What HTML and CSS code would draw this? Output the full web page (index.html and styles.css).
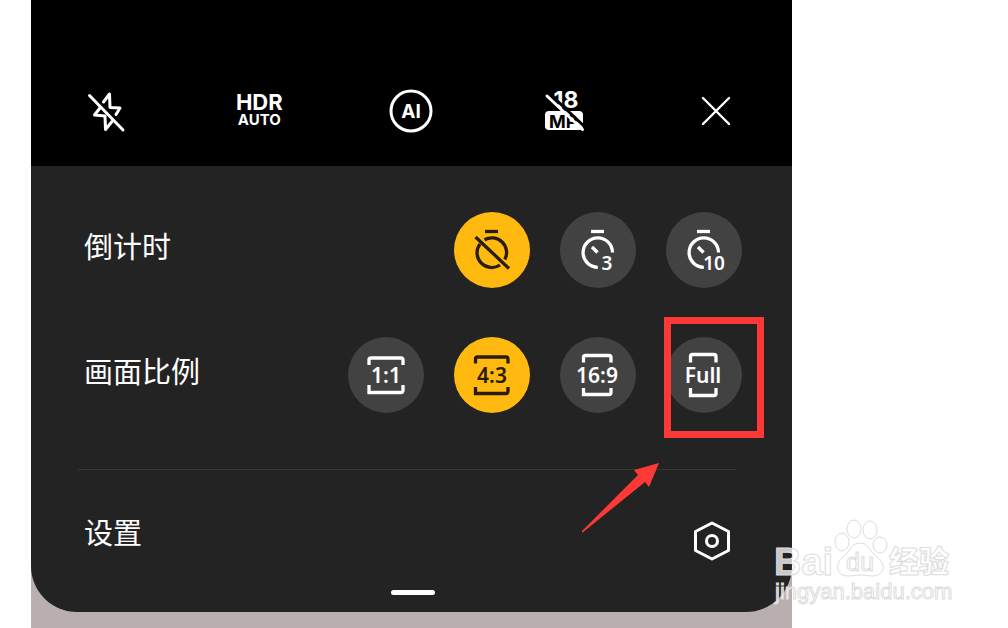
FILE: index.html
```html
<!DOCTYPE html>
<html lang="zh-CN">
<head>
    <meta charset="UTF-8">
    <meta name="viewport" content="width=device-width, initial-scale=1.0">
    <title>相机设置</title>
    <link rel="stylesheet" href="styles.css">
</head>
<body>
    <main class="screen">
        <header class="toolbar">
            <button type="button" class="tool" aria-label="闪光灯关闭">
                <svg class="icon" viewBox="0 0 44 44">
                    <path class="line" d="M18.500 13 L24.500 5 L25 18.500 L35 19 L31 25.500 M15 19 L9.500 26 L20 27 L20.500 40.500 L27 32.500"/>
                    <path class="line" d="M4.500 6.500 L38 41"/>
                </svg>
            </button>
            <button type="button" class="tool hdr">
                <span class="hdr-title">HDR</span>
                <span class="hdr-mode">AUTO</span>
            </button>
            <button type="button" class="tool" aria-label="AI">
                <svg class="icon" viewBox="0 0 44 44">
                    <circle class="line" cx="22" cy="22" r="20"/>
                    <text class="ai-text" x="22" y="29">AI</text>
                </svg>
            </button>
            <button type="button" class="tool" aria-label="18MP 关闭">
                <svg class="icon" viewBox="0 0 44 44">
                    <text class="mp-number" x="24" y="19">18</text>
                    <rect x="3" y="22" width="38" height="19" rx="4" fill="#fff"/>
                    <text class="mp-unit" x="7" y="39">MP</text>
                    <path d="M7 4 L44 39" stroke="#000" stroke-width="3"/>
                    <path class="line" d="M5 7 L40.500 40.500"/>
                </svg>
            </button>
            <button type="button" class="tool" aria-label="关闭">
                <svg class="icon" viewBox="0 0 44 44">
                    <path class="line thin" d="M9 9 L35 35 M35 9 L9 35"/>
                </svg>
            </button>
        </header>

        <section class="panel">
            <div class="row" role="group" aria-labelledby="timer-label">
                <h2 class="label" id="timer-label">倒计时</h2>
                <div class="options">
                    <button type="button" class="option active" aria-pressed="true" aria-label="倒计时关闭">
                        <svg viewBox="0 0 76 76">
                            <path d="M31 19.500 H44"/>
                            <path d="M30.500 27.800 A14.700 14.700 0 0 1 50.800 47.500 M26 32 A14.700 14.700 0 0 0 46 53"/>
                            <path d="M21.500 25 L55 56.500"/>
                        </svg>
                    </button>
                    <button type="button" class="option" aria-pressed="false" aria-label="3 秒">
                        <svg viewBox="0 0 76 76">
                            <path d="M31 19.500 H44"/>
                            <path d="M52.500 40.500 A14.700 14.700 0 1 0 37.800 55.300"/>
                            <path d="M32 35 L37.500 40.500"/>
                            <text class="seconds" x="47" y="58">3</text>
                        </svg>
                    </button>
                    <button type="button" class="option" aria-pressed="false" aria-label="10 秒">
                        <svg viewBox="0 0 76 76">
                            <path d="M31 19.500 H44"/>
                            <path d="M52.500 40.500 A14.700 14.700 0 1 0 37.800 55.300"/>
                            <path d="M32 35 L37.500 40.500"/>
                            <text class="seconds" x="48" y="58">10</text>
                        </svg>
                    </button>
                </div>
            </div>

            <div class="row" role="group" aria-labelledby="ratio-label">
                <h2 class="label" id="ratio-label">画面比例</h2>
                <div class="options">
                    <button type="button" class="option" aria-pressed="false">
                        <svg viewBox="0 0 76 76">
                            <path d="M21 28 V23 Q21 21 23 21 H53 Q55 21 55 23 V28 M21 48 V55.500 H53 Q55 55.500 55 53 V48"/>
                            <text x="38" y="46">1:1</text>
                        </svg>
                    </button>
                    <button type="button" class="option active" aria-pressed="true">
                        <svg viewBox="0 0 76 76">
                            <path d="M21.500 26.500 V22 Q21.500 20 23.500 20 H52 Q54 20 54 22 V26.500 M21.500 50 V56.500 H52 Q54 56.500 54 54 V50"/>
                            <text x="38" y="46">4:3</text>
                        </svg>
                    </button>
                    <button type="button" class="option" aria-pressed="false">
                        <svg viewBox="0 0 76 76">
                            <path d="M23.500 25.500 V20.500 Q23.500 18.500 25.500 18.500 H49 Q51 18.500 51 20.500 V25.500 M23.500 51 V57.500 H49 Q51 57.500 51 55.500 V51"/>
                            <text x="37" y="46">16:9</text>
                        </svg>
                    </button>
                    <div class="marked">
                        <button type="button" class="option" aria-pressed="false">
                            <svg viewBox="0 0 76 76">
                                <path d="M24.500 25.500 V19.500 Q24.500 17.500 26.500 17.500 H48 Q50 17.500 50 19.500 V25.500 M24.500 51 V58.500 H48 Q50 58.500 50 56.500 V51"/>
                                <text x="37" y="46">Full</text>
                            </svg>
                        </button>
                        <svg class="marker" viewBox="0 0 182 216" aria-hidden="true">
                            <rect x="85.500" y="3.500" width="93" height="114" fill="none" stroke="#fd3938" stroke-width="7"/>
                            <path d="M77 146 L52 153 L56 158 L0 214 V216 L63 165 L67 170 Z" fill="#fd3938"/>
                        </svg>
                    </div>
                </div>
            </div>

            <hr class="divider">

            <div class="row settings">
                <h2 class="label">设置</h2>
                <button type="button" class="tool" aria-label="设置">
                    <svg class="icon" viewBox="0 0 44 44">
                        <path class="line" d="M22 4 L38.500 12.500 V31.500 L22 40 L5.500 31.500 V12.500 Z"/>
                        <circle class="line" cx="22" cy="22" r="5.500"/>
                    </svg>
                </button>
            </div>

            <div class="handle"></div>
        </section>

        <svg class="watermark" viewBox="0 0 182 88" role="img" aria-label="Baidu 经验">
            <text class="wm-brand" x="0" y="57">Bai</text>
            <ellipse cx="68" cy="24" rx="7" ry="9"/>
            <ellipse cx="80" cy="11" rx="7" ry="9"/>
            <ellipse cx="96" cy="12" rx="7" ry="9"/>
            <ellipse cx="106" cy="27" rx="7" ry="8"/>
            <path d="M86 25 C95 25 96 34 103 39 C114 47 109 58 99 58 C94 58 91 57 86 57 C81 57 79 58 74 58 C62 58 61 46 68 40 C76 34 77 25 86 25 Z"/>
            <text class="wm-du" x="72" y="53">du</text>
            <text class="wm-cn" x="115" y="54">经验</text>
            <text class="wm-url" x="1" y="81">jingyan.baidu.com</text>
        </svg>
    </main>
</body>
</html>
```
FILE: styles.css
```css
* {
    margin: 0;
    padding: 0;
    box-sizing: border-box;
}

body {
    background: #fff;
    font-family: Inter, "Noto Sans CJK SC", sans-serif;
    padding: 0 216px 0 31px;
}

button {
    background: none;
    border: none;
    color: inherit;
    font: inherit;
    cursor: pointer;
}

.screen {
    position: relative;
    min-height: 100vh;
    padding-bottom: 16px;
    background: linear-gradient(#000 50%, #b9afae 50%);
    color: #fff;
}

.toolbar {
    display: grid;
    grid-template-columns: repeat(5, 1fr);
    justify-items: center;
    align-items: center;
    height: 166px;
    padding-top: 56px;
    background: #000;
}

.tool {
    display: flex;
    justify-content: center;
    align-items: center;
}

.icon {
    display: block;
    width: 44px;
    height: 44px;
    overflow: visible;
}

.line {
    fill: none;
    stroke: #fff;
    stroke-width: 3;
    stroke-linecap: round;
    stroke-linejoin: round;
}

.line.thin {
    stroke-width: 2.4;
}

.hdr {
    flex-direction: column;
    font-weight: 700;
}

.hdr-title {
    font-size: 22px;
    line-height: 18px;
}

.hdr-mode {
    font-size: 15px;
    line-height: 18px;
}

.icon text {
    fill: #fff;
    font-family: Inter, sans-serif;
    font-weight: 700;
}

.ai-text {
    font-size: 19px;
    text-anchor: middle;
}

.mp-number {
    font-size: 23px;
    text-anchor: middle;
}

.icon .mp-unit {
    fill: #000;
    font-size: 18px;
}

.panel {
    padding: 46px 50px 17px 53px;
    background: #242323;
    border-radius: 0 0 46px 46px;
}

.row {
    display: flex;
    justify-content: space-between;
    align-items: center;
    margin-bottom: 49px;
}

.label {
    padding-bottom: 10px;
    font-family: KaiTi, STKaiti, "Noto Sans CJK SC", sans-serif;
    font-size: 29px;
    font-weight: 400;
    line-height: 32px;
}

.options {
    display: flex;
    gap: 30px;
}

.option {
    display: block;
    width: 76px;
    height: 76px;
    border-radius: 50%;
    background: #434243;
    color: #fff;
}

.option.active {
    background: #ffb90f;
    color: #2b1c08;
}

.option svg {
    display: block;
    width: 76px;
    height: 76px;
}

.option path {
    fill: none;
    stroke: currentColor;
    stroke-width: 3.3;
}

.option text {
    fill: currentColor;
    font-family: "Noto Sans", sans-serif;
    font-size: 21px;
    font-weight: 600;
    text-anchor: middle;
}

.option .seconds {
    font-size: 19px;
}

.marked {
    position: relative;
}

/* red frame and arrow over the last option */
.marker {
    position: absolute;
    top: -20px;
    right: -22px;
    width: 182px;
    height: 216px;
    pointer-events: none;
}

.divider {
    height: 1px;
    margin: 56px 6px 49px -6px;
    border: none;
    background: #393738;
}

.settings {
    height: 44px;
    margin-bottom: 27px;
    padding-right: 8px;
}

.settings .label {
    padding-bottom: 20px;
}

.handle {
    width: 44px;
    height: 5px;
    margin: 0 auto;
    border-radius: 3px;
    background: #fff;
}

.watermark {
    position: absolute;
    left: calc(100% - 18px);
    bottom: 22px;
    width: 182px;
    height: 88px;
    fill: rgba(255, 255, 255, 0.75);
    stroke: #dcdcdc;
    stroke-width: 1;
    font-family: "Liberation Sans", sans-serif;
    pointer-events: none;
}

.wm-brand {
    font-size: 38px;
    font-weight: 700;
}

.wm-du {
    font-size: 25px;
}

.wm-cn {
    font-family: "Noto Sans CJK SC", sans-serif;
    font-size: 30px;
    font-weight: 900;
}

.wm-url {
    font-size: 22px;
}
```
